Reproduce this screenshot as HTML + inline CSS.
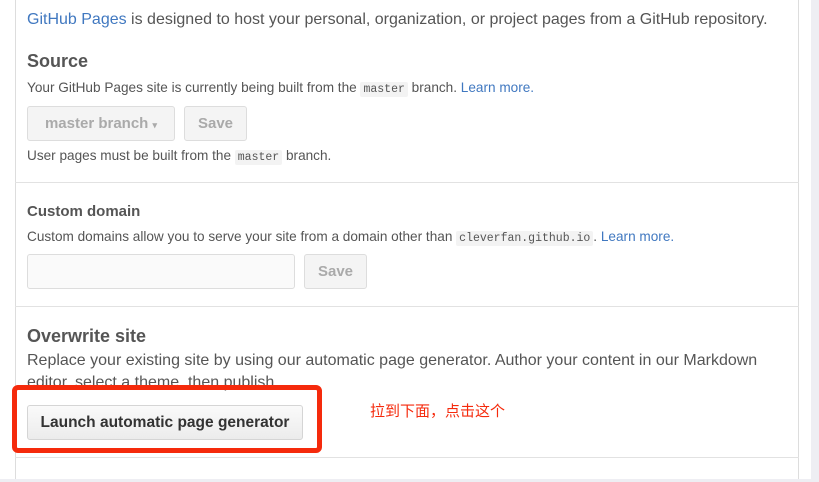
<!DOCTYPE html>
<html><head><meta charset="utf-8"><style>
*{margin:0;padding:0;box-sizing:border-box}
body{width:819px;height:482px;background:#fff;position:relative;overflow:hidden;font-family:"Liberation Sans","Noto Sans CJK SC",sans-serif;color:#555}
.a{position:absolute;white-space:nowrap}
.l{color:#4078c0}
code{font-family:"Liberation Mono",monospace;font-size:11.5px;background:#f3f3f3;padding:1px 3px;border-radius:2px;color:#555}
.btn{position:absolute;border:1px solid #ddd;border-radius:3px;background:#f4f4f4;color:#aaa;font-weight:bold;font-size:15px;text-align:center}
.h{font-weight:bold;color:#555}
.sm{font-size:13.6px}
</style></head><body>
<div class="a" style="left:15px;top:0;width:1px;height:482px;background:#ddd"></div>
<div class="a" style="left:798px;top:0;width:1px;height:482px;background:#ddd"></div>
<div class="a" style="left:811px;top:0;width:8px;height:482px;background:#eeeef3"></div>
<div class="a" style="left:0;top:479px;width:819px;height:3px;background:#eeeef3"></div>
<div class="a" style="left:15px;top:182px;width:784px;height:1px;background:#e2e2e2"></div>
<div class="a" style="left:15px;top:306px;width:784px;height:1px;background:#e2e2e2"></div>
<div class="a" style="left:15px;top:457px;width:784px;height:1px;background:#e2e2e2"></div>

<div class="a" style="left:27px;top:11px;font-size:16px"><span class="l">GitHub Pages</span> is designed to host your personal, organization, or project pages from a GitHub repository.</div>
<div class="a h" style="left:27px;top:51px;font-size:18px">Source</div>
<div class="a sm" style="left:27px;top:80px">Your GitHub Pages site is currently being built from the <code>master</code> branch. <span class="l">Learn more.</span></div>
<div class="btn" style="left:27px;top:106px;width:148px;height:35px;line-height:33px">master branch <span style="font-size:9px">▾</span></div>
<div class="btn" style="left:184px;top:106px;width:63px;height:35px;line-height:33px">Save</div>
<div class="a sm" style="left:27px;top:148px">User pages must be built from the <code>master</code> branch.</div>

<div class="a h" style="left:27px;top:203px;font-size:15px">Custom domain</div>
<div class="a sm" style="left:27px;top:229px">Custom domains allow you to serve your site from a domain other than <code>cleverfan.github.io</code>. <span class="l">Learn more.</span></div>
<div class="a" style="left:27px;top:254px;width:268px;height:35px;border:1px solid #ddd;border-radius:3px;background:#fafafa"></div>
<div class="btn" style="left:304px;top:254px;width:63px;height:35px;line-height:33px">Save</div>

<div class="a h" style="left:27px;top:326px;font-size:18px">Overwrite site</div>
<div class="a" style="left:27px;top:352px;font-size:16px">Replace your existing site by using our automatic page generator. Author your content in our Markdown</div>
<div class="a" style="left:27px;top:374px;font-size:16px">editor, select a theme, then publish.</div>
<div class="a" style="left:27px;top:405px;width:276px;height:35px;border:1px solid #d5d5d5;border-radius:3px;background:linear-gradient(#fafafa,#ececec);color:#333;font-weight:bold;font-size:15.5px;text-align:center;line-height:33px">Launch automatic page generator</div>
<div class="a" style="left:12px;top:385px;width:310px;height:68px;border:5px solid #f52a0c;border-radius:6px"></div>
<div class="a" style="left:370px;top:400px;font-size:15px;color:#f52a0c">拉到下面，点击这个</div>
</body></html>
